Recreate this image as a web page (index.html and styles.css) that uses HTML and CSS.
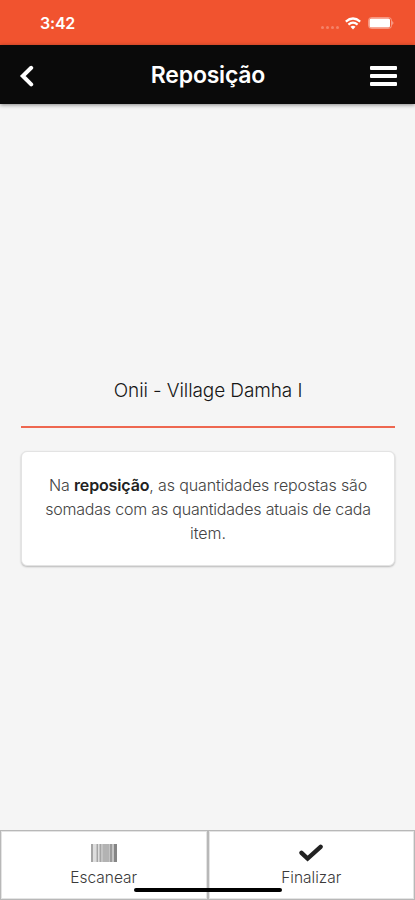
FILE: index.html
```html
<!DOCTYPE html>
<html lang="pt-BR">
<head>
<meta charset="utf-8">
<title>Reposição</title>
<link rel="stylesheet" href="styles.css">
</head>
<body>
<div class="screen">
  <div class="status">
    <span class="time">3:42</span>
    <div class="indicators">
      <span class="signal"><i></i><i></i><i></i><i></i></span>
      <svg class="wifi" width="16" height="13" viewBox="0 0 16 13" fill="none" stroke="#fff" stroke-width="2.2">
        <path d="M.8 4.6Q8-1.6 15.2 4.6"/><path d="M3.4 7.7Q8 3.7 12.6 7.7"/><path d="M5.5 9.7Q8 7.7 10.5 9.7L8 12.4Z" fill="#fff" stroke="none"/>
      </svg>
      <svg class="battery" width="26" height="12" viewBox="0 0 26 12">
        <rect x=".5" y=".5" width="23" height="11" rx="3" fill="none" stroke="#fff" stroke-opacity=".4"/>
        <rect x="1.5" y="1.5" width="20.5" height="9" rx="1.5" fill="#fff"/><path d="M24.3 4Q26.5 6 24.3 8Z" fill="#fff" fill-opacity=".55"/>
      </svg>
    </div>
  </div>
  <header class="bar">
    <svg class="back" width="16" height="24" viewBox="0 0 16 24" fill="none" stroke="#fff" stroke-width="4" stroke-linecap="round"><path d="M13.2 3.8 4.8 12l8.4 8.4"/></svg>
    <h1>Reposição</h1>
    <div class="menu"><i></i><i></i><i></i></div>
  </header>
  <main>
    <h2>Onii - Village Damha I</h2>
    <div class="card"><p><span class="first">Na <b>reposição</b>, as quantidades repostas são</span><br><span class="second">somadas com as quantidades atuais de cada</span><br>item.</p></div>
  </main>
  <footer>
    <div class="action">
      <svg width="26" height="18" viewBox="0 0 26 18">
        <rect width="26" height="18" fill="#c4c4c4"/>
        <path d="M0 0h2v18H0zM6 0h1v18H6zM9 0h1v18H9z" fill="#a5a5a5"/>
        <path d="M2 0h3v18H2zM7 0h1v18H7z" fill="#dedede"/>
        <path d="M12 0h6v18h-6z" fill="#b3b3b3"/><path d="M19 0h2v18h-2z" fill="#9b9b9b"/><path d="M23 0h3v18h-3z" fill="#858585"/>
      </svg>
      <span>Escanear</span>
    </div>
    <div class="action">
      <svg width="26" height="18" viewBox="0 0 26 18" fill="none" stroke="#222" stroke-width="4.4" stroke-linecap="round"><path d="M3.5 8.8 9.6 14.6 22.6 2.8"/></svg>
      <span>Finalizar</span>
    </div>
    <div class="home"></div>
  </footer>
</div>
</body>
</html>
```
FILE: styles.css
```css
* { box-sizing: border-box; }
body { margin: 0; font-family: Inter, "Liberation Sans", sans-serif; }
.screen { height: 900px; display: flex; flex-direction: column; background: #f5f5f5; overflow: hidden; }
.status { height: 45px; flex: none; background: #f1532f; color: #fff; display: flex; justify-content: space-between; padding: 0 21px 0 40px; }
.time { font-size: 16px; line-height: 46px; font-weight: 600; letter-spacing: -.2px; }
.indicators { display: flex; align-items: center; height: 46px; }
.signal { display: flex; gap: 2px; padding-top: 9px; margin-right: 6px; }
.signal i { width: 3px; height: 3px; border-radius: 50%; background: #fff; opacity: .28; }
.wifi { margin-right: 7px; }
.bar { height: 59px; flex: none; background: #0a0a0a; display: flex; align-items: center; justify-content: space-between; padding: 0 18px; box-shadow: 0 1px 4px rgba(0,0,0,.45); }
.back { margin-right: 12px; margin-top: 3px; }
h1 { margin: 0; color: #fff; font-size: 23px; line-height: 30px; font-weight: 600; letter-spacing: -.2px; }
.menu { width: 27px; display: grid; gap: 4px; margin-top: 2px; }
.menu i { height: 4px; background: #fff; border-radius: 1px; }
main { flex: 1; padding: 266px 20px 0 21px; }
h2 { margin: 0; height: 58px; padding-top: 6px; border-bottom: 2px solid #ee6750; font-size: 19px; line-height: 30px; font-weight: 300; letter-spacing: -.1px; text-align: center; color: #161616; }
.card { height: 115px; margin-top: 23px; padding-top: 21px; background: #fff; border: 1px solid #e3e3e3; border-radius: 6px; box-shadow: 0 1px 2px rgba(0,0,0,.25); }
p { margin: 0; font-size: 16px; line-height: 24px; font-weight: 300; text-align: center; color: #444; white-space: nowrap; }
.first { letter-spacing: -.13px; }
.second { letter-spacing: -.2px; }
b { font-weight: 600; color: #222; }
footer { position: relative; height: 70px; flex: none; display: grid; grid-template-columns: 1fr 1fr; background: #fff; }
.action { border: 1px solid #b8b8b8; box-shadow: inset 0 0 0 1px #e4e4e4; display: flex; flex-direction: column; align-items: center; padding-top: 13px; font-size: 15.5px; line-height: 20px; font-weight: 300; color: #3a3a3a; }
.action span { margin-top: 6px; }
.home { position: absolute; left: 134px; bottom: 8px; width: 148px; height: 4px; border-radius: 2px; background: #000; }
```
